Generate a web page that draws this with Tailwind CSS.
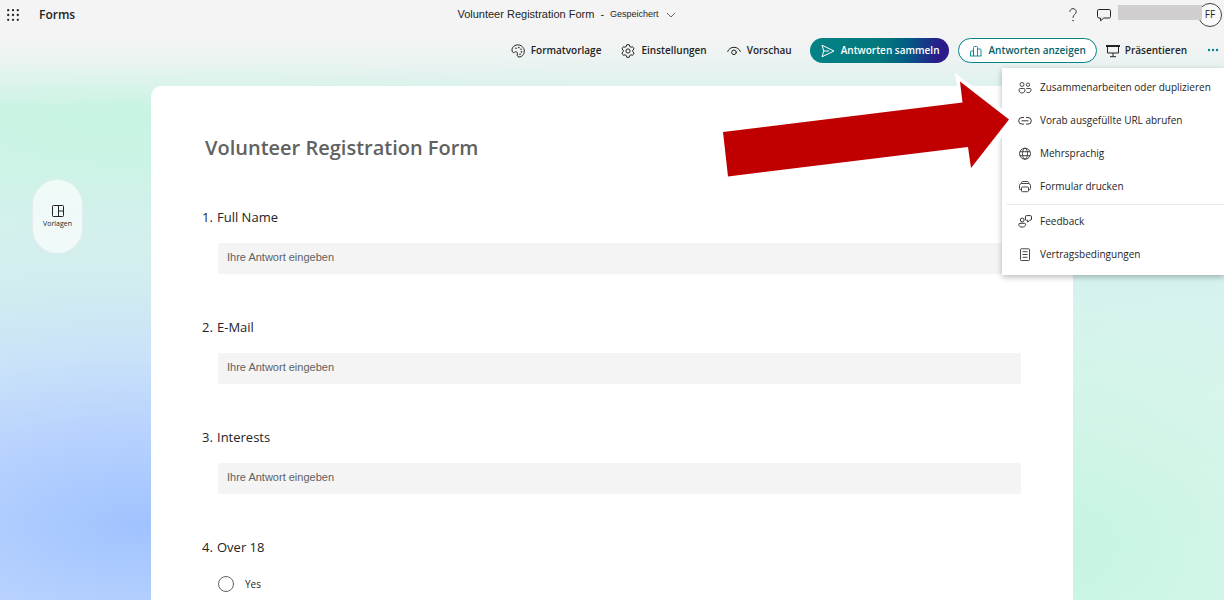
<!DOCTYPE html>
<html lang="de">
<head>
<meta charset="utf-8">
<meta name="viewport" content="width=device-width, initial-scale=1">
<title>Volunteer Registration Form</title>
<script src="https://cdn.jsdelivr.net/npm/@tailwindcss/browser@4"></script>
</head>
<body class="relative flex h-screen flex-col overflow-hidden bg-[#d4f5ee] bg-[linear-gradient(180deg,#f4f4f4_0px,#f4f4f4_36px,#f1f3f3cc_62px,transparent_108px),radial-gradient(800px_360px_at_140px_525px,#a0c2ff_0%,#b7d2fe_26%,#cbe3f8_49%,#d3eeee_71%,#d4f5ea00_100%),radial-gradient(460px_160px_at_130px_112px,#c8f4e2_0%,#c8f4e200_100%),radial-gradient(340px_260px_at_1060px_545px,#c6f4e2_0%,#c6f4e200_100%),linear-gradient(180deg,#d2f3ec_0px,#d2f2ec_100px,#d6f2ef_290px,#def6ee_420px,#dcf8ec_600px)] font-['Open_Sans','Noto_Sans',sans-serif] text-[#242424]">

<header class="flex h-7 shrink-0 items-center pt-px text-[11px]">
  <div class="flex flex-1 items-center gap-5 pl-[7px]">
    <button type="button" aria-label="App-Startfeld" class="flex size-3 items-center justify-center">
      <svg class="size-3" viewBox="0 0 12 12" fill="#242424"><circle cx="1.2" cy="1.2" r="1.15"/><circle cx="6" cy="1.2" r="1.15"/><circle cx="10.8" cy="1.2" r="1.15"/><circle cx="1.2" cy="6" r="1.15"/><circle cx="6" cy="6" r="1.15"/><circle cx="10.8" cy="6" r="1.15"/><circle cx="1.2" cy="10.8" r="1.15"/><circle cx="6" cy="10.8" r="1.15"/><circle cx="10.8" cy="10.8" r="1.15"/></svg>
    </button>
    <a href="#" class="text-xs font-semibold">Forms</a>
  </div>
  <button type="button" class="mr-[99px] flex items-center font-['Liberation_Sans',sans-serif]">
    <span>Volunteer Registration Form</span><span class="px-1.5">-</span><span class="text-[9px]">Gespeichert</span>
    <svg class="ml-2 size-2" viewBox="0 0 8 8" fill="none" stroke="#444" stroke-width=".8"><path d="M0 2l4 4 4-4"/></svg>
  </button>
  <div class="flex flex-1 items-center justify-end">
    <button type="button" aria-label="Hilfe" class="mr-5"><svg class="h-3.5 w-2" viewBox="0 0 8 14" fill="none" stroke="#333" stroke-width="1"><path d="M.8 3.8C.8 1.8 2.200.7 4 .7s3.200 1.200 3.200 3C7.200 6.300 4 6.500 4 9.800"/><circle cx="4" cy="12.600" r=".5" fill="#333" stroke-width=".5"/></svg></button>
    <button type="button" aria-label="Kommentare" class="mr-[7px]"><svg class="size-3.5" viewBox="0 0 14 14" fill="none" stroke="#242424" stroke-linejoin="round"><path d="M1.800 1.500h10.400c.7 0 1.300.6 1.300 1.300v5.900c0 .7-.6 1.300-1.300 1.300H6.800L3.600 12.800V10H1.800C1.100 10 .5 9.400.5 8.700V2.800c0-.7.6-1.300 1.300-1.300z"/></svg></button>
    <div class="relative flex items-center">
      <span class="relative z-10 -mr-1 mb-1 h-[15px] w-[84px] bg-[#d0cece]"></span>
      <button type="button" class="mr-0.5 flex size-6 items-center justify-center rounded-full border border-[#424242] bg-white/50 text-[10px]">FF</button>
    </div>
  </div>
</header>

<nav class="flex h-[45px] shrink-0 items-center justify-end pr-[5px] text-[10px] font-semibold">
  <button type="button" class="mr-5 flex items-center gap-1.5">
    <svg class="size-3.5" viewBox="0 0 14 14" fill="none" stroke="#242424"><path d="M1.100 6.800C.4 4.400 2.600 1.200 6.300.9c4-.3 7 2.700 7 6.100 0 3.500-2.600 6.200-5.300 6-1.700-.2-2-1.600-1.700-3 .2-1.200-.1-2.300-1.400-2.300-1.200 0-1.600 1.200-2.600.9-.7-.2-1-.9-1.200-1.800z"/><g fill="#242424" stroke="none"><circle cx="5" cy="4.300" r=".8"/><circle cx="7.800" cy="3.600" r=".8"/><circle cx="10" cy="5.200" r=".8"/><circle cx="10.500" cy="7.900" r=".8"/><circle cx="9" cy="10.200" r=".8"/></g></svg>
    Formatvorlage</button>
  <button type="button" class="mr-5 flex items-center gap-1.5">
    <svg class="size-3.5" viewBox="0 0 14 14" fill="none" stroke="#242424" stroke-linejoin="round"><path d="M5.700.8Q7 .4 8.300.8L8.700 2.500 10 3.200 11.700 2.700Q12.600 3.700 13 4.900L11.800 6.200V7.800L13 9.100Q12.600 10.300 11.700 11.300L10 10.800 8.700 11.500 8.300 13.200Q7 13.600 5.700 13.200L5.300 11.500 4 10.800 2.300 11.300Q1.400 10.300 1 9.100L2.200 7.800V6.200L1 4.900Q1.400 3.700 2.300 2.700L4 3.200 5.300 2.500z"/><circle cx="7" cy="7" r="2.100"/></svg>
    Einstellungen</button>
  <button type="button" class="mr-[18px] flex items-center gap-1.5">
    <svg class="size-3.5" viewBox="0 0 14 14" fill="none" stroke="#242424" stroke-linecap="round"><path d="M.7 7.500C1.600 4.900 4.100 3.300 7 3.300s5.400 1.600 6.300 4.200"/><circle cx="7" cy="8.300" r="2.300"/></svg>
    Vorschau</button>
  <button type="button" class="mr-[9px] flex h-[25px] items-center gap-1.5 rounded-full bg-[linear-gradient(100deg,#038387_0%,#03787c_52%,#035a85_70%,#2a1a8a_92%)] pr-[9px] pl-[11px] text-white">
    <svg class="size-3.5" viewBox="0 0 14 14" fill="none" stroke="#fff" stroke-linejoin="round"><path d="M1 1.200L13 7 1 12.800 2.800 7zM2.800 7H8"/></svg>
    Antworten sammeln</button>
  <button type="button" class="mr-[9px] flex h-[25px] items-center gap-1.5 rounded-full border border-[#038387] bg-white px-2.5 text-[#036367]">
    <svg class="size-3.5" viewBox="0 0 14 14" fill="none" stroke="#038387" stroke-width=".9"><path d="M1.500 12V8q0-1 1-1h2V12M4.500 12V3.500q0-1 1-1h2q1 0 1 1V12M8.500 5h2.500q1 0 1 1V12M1.100 12h11.300"/></svg>
    Antworten anzeigen</button>
  <button type="button" class="mr-5 flex items-center gap-[5px]">
    <svg class="size-3.5" viewBox="0 0 14 14" fill="none" stroke="#242424"><path d="M0 2h14" stroke-width="2"/><path d="M1.500 2.500V9h11V2.500M7 9v3.500M4 12.700h6"/></svg>
    Präsentieren</button>
  <button type="button" aria-label="Weitere Optionen" class="flex items-center pb-0.5"><svg class="h-1 w-3" viewBox="0 0 12 4" fill="#038387"><circle cx="2" cy="2" r="1.200"/><circle cx="6" cy="2" r="1.200"/><circle cx="10" cy="2" r="1.200"/></svg></button>
</nav>

<main class="grid min-h-0 flex-1 grid-cols-[151px_1fr_151px] pt-[13px]">
  <aside class="pt-[93px] pl-8">
    <button type="button" class="flex h-[75px] w-[51px] flex-col items-center justify-center gap-px rounded-full border border-black/5 bg-white/65 text-[7px] leading-[10px]">
      <svg class="size-3.5" viewBox="0 0 14 14" fill="none" stroke="#242424"><rect x="1.500" y="1.500" width="11" height="11" rx=".8"/><path d="M7.500 1.500v11M7.500 7h5"/></svg>
      Vorlagen</button>
  </aside>
  <form class="rounded-t-[10px] bg-white pr-[52px] pl-[51px]">
    <h1 class="pt-[46px] pl-[3px] text-xl leading-8 font-semibold text-[#616161]">Volunteer Registration Form</h1>
    <div class="pt-11">
      <label for="q1" class="flex h-5 items-center text-[13px]"><span class="w-[15px]">1.</span>Full Name</label>
      <input id="q1" type="text" placeholder="Ihre Antwort eingeben" class="mt-[15px] ml-4 block h-[31px] w-[calc(100%-16px)] rounded-xs bg-[#f4f4f4] px-[9px] pb-[3px] font-['Liberation_Sans',sans-serif] text-[11px] placeholder:text-[#616161]">
    </div>
    <div class="pt-11">
      <label for="q2" class="flex h-5 items-center text-[13px]"><span class="w-[15px]">2.</span>E-Mail</label>
      <input id="q2" type="text" placeholder="Ihre Antwort eingeben" class="mt-[15px] ml-4 block h-[31px] w-[calc(100%-16px)] rounded-xs bg-[#f4f4f4] px-[9px] pb-[3px] font-['Liberation_Sans',sans-serif] text-[11px] placeholder:text-[#616161]">
    </div>
    <div class="pt-11">
      <label for="q3" class="flex h-5 items-center text-[13px]"><span class="w-[15px]">3.</span>Interests</label>
      <input id="q3" type="text" placeholder="Ihre Antwort eingeben" class="mt-[15px] ml-4 block h-[31px] w-[calc(100%-16px)] rounded-xs bg-[#f4f4f4] px-[9px] pb-[3px] font-['Liberation_Sans',sans-serif] text-[11px] placeholder:text-[#616161]">
    </div>
    <fieldset class="pt-11">
      <legend class="contents"><span class="flex h-5 items-center text-[13px]"><span class="w-[15px]">4.</span>Over 18</span></legend>
      <label class="mt-[18px] ml-4 flex items-center gap-[11px] text-[10px] leading-4"><input type="radio" name="q4" class="size-4 appearance-none rounded-full border border-[#616161] bg-white checked:border-4">Yes</label>
    </fieldset>
  </form>
</main>

<div role="menu" class="absolute top-[68px] right-0 w-[222px] bg-white pt-[3px] pb-1 text-[10px] whitespace-nowrap shadow-[0_2px_6px_rgba(0,0,0,0.28)]">
  <button type="button" role="menuitem" class="flex h-[33px] w-full items-center gap-2 pl-4">
    <svg class="size-3.5" viewBox="0 0 14 14" fill="none" stroke="#333" stroke-width=".9"><circle cx="4" cy="3.500" r="2"/><circle cx="10" cy="3.700" r="1.700"/><path d="M2.200 7.500h3.600q1.200 0 1.200 1.200c0 2-1.200 3.300-3 3.300S1 10.700 1 8.700q0-1.200 1.200-1.200zM8.300 7.500H12q1.100 0 1.100 1.200c0 1.700-1.100 2.900-2.900 2.900q-1.200 0-1.900-.6"/></svg>
    Zusammenarbeiten oder duplizieren</button>
  <button type="button" role="menuitem" class="flex h-[33px] w-full items-center gap-2 pl-4">
    <svg class="size-3.5" viewBox="0 0 14 14" fill="none" stroke="#333" stroke-linecap="round"><path d="M5.500 3.500H4a3.300 3.300 0 0 0 0 6.600h1.500M8.500 3.500H10a3.300 3.300 0 0 1 0 6.600H8.500M4 6.800h6"/></svg>
    Vorab ausgefüllte URL abrufen</button>
  <button type="button" role="menuitem" class="flex h-[33px] w-full items-center gap-2 pl-4">
    <svg class="size-3.5" viewBox="0 0 14 14" fill="none" stroke="#333" stroke-width=".9"><circle cx="7" cy="6.700" r="5.500"/><ellipse cx="7" cy="6.700" rx="2.500" ry="5.500"/><path d="M2 4.700h10M2 8.700h10"/></svg>
    Mehrsprachig</button>
  <button type="button" role="menuitem" class="flex h-[33px] w-full items-center gap-2 pl-4">
    <svg class="size-3.5" viewBox="0 0 14 14" fill="none" stroke="#333" stroke-width=".9"><path d="M3.500 3.500V2.700q0-1.200 1.200-1.200h4.600q1.200 0 1.200 1.200v.8M3.500 9.800H2.700q-1.200 0-1.200-1.200V5.500q0-2 2-2h7q2 0 2 2v3.100q0 1.200-1.200 1.200h-.8"/><rect x="3.500" y="7" width="7" height="4.700" rx="1"/></svg>
    Formular drucken</button>
  <hr class="ml-1 mt-px border-[#ebebeb]">
  <button type="button" role="menuitem" class="flex h-[33px] w-full items-center gap-2 pl-4">
    <svg class="size-3.5" viewBox="0 0 14 14" fill="none" stroke="#333" stroke-linejoin="round"><circle cx="4.200" cy="5" r="1.900"/><path d="M2 8.300h4.400q1.200 0 1.200 1.200c0 1.700-1.500 2.600-3.400 2.600S.8 11.200.8 9.500q0-1.200 1.200-1.200zM8.600.6h3.700q1.200 0 1.200 1.200v2.300q0 1.200-1.200 1.200h-.8L9.600 7.100V5.300h-1q-1.200 0-1.200-1.200V1.800q0-1.200 1.200-1.200z"/></svg>
    Feedback</button>
  <button type="button" role="menuitem" class="flex h-[33px] w-full items-center gap-2 pl-4">
    <svg class="size-3.5" viewBox="0 0 14 14" fill="none" stroke="#333" stroke-width=".9"><rect x="2.500" y=".8" width="9" height="11.700" rx=".8"/><path d="M4.500 3.700h5M4.500 6.500h5M4.500 9.300h5"/></svg>
    Vertragsbedingungen</button>
</div>

<svg class="absolute top-[70px] right-[204px] h-[110px] w-[300px]" viewBox="720 70 300 110" aria-hidden="true">
  <path d="M955 73L1008 113V129L972 175 962 120z" fill="#fff"/>
  <path d="M723 132L962.500 102.500 960 81.500 1009 119.500 971 168 968 147 728 176.500z" fill="#c00000"/>
</svg>
</body>
</html>
